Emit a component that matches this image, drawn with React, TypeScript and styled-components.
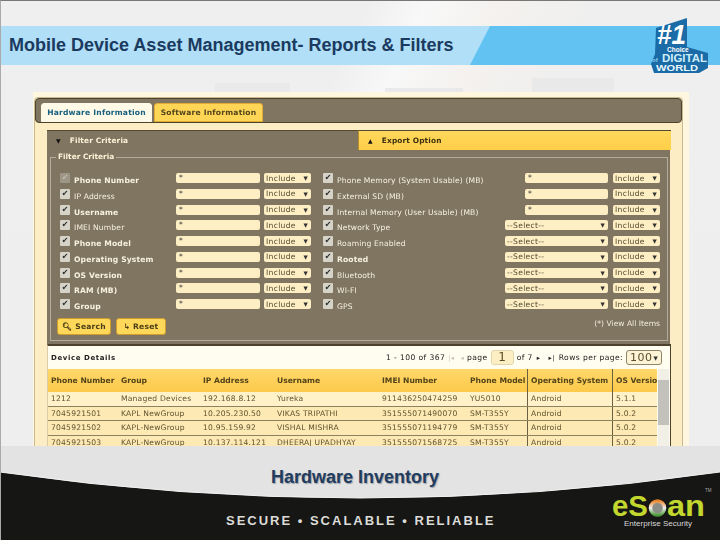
import React from "react";
import styled, { createGlobalStyle } from "styled-components";

const Global = createGlobalStyle`
  html, body { margin: 0; padding: 0; background: #efefef; }
  * { box-sizing: border-box; }
`;

const Slide = styled.div`
  position: relative;
  width: 720px;
  height: 540px;
  overflow: hidden;
  display: flex;
  flex-direction: column;
  padding-top: 25px;
  border-top: 1px solid #777;
  border-left: 1px solid #aaa;
  background:
    linear-gradient(115deg, transparent 38%, #f8f8f8 44%, #f4f1ee 52%, transparent 62%),
    linear-gradient(180deg, #efefef 0%, #eeeeee 100%);
`;

const Banner = styled.header`
  position: relative;
  height: 39px;
  margin-left: -1px;
  display: flex;
  align-items: center;
  justify-content: space-between;
  background: #b0dff7;
  flex: none;
`;

const Title = styled.h1`
  margin: 0 0 0 9px;
  font: bold 18px "Liberation Sans", Arial, sans-serif;
  color: #1b3a5f;
  white-space: nowrap;
`;

const BannerAccent = styled.div`
  width: 250px;
  height: 39px;
  background: #62c3f3;
  clip-path: polygon(20px 0, 100% 0, 100% 100%, 0 100%);
`;

const BadgeSvg = styled.svg`
  position: absolute;
  left: 649px;
  top: -8px;
`;

const Ghost = styled.div<{ $x: number; $w: number; $h: number }>`
  position: absolute;
  left: ${(p) => p.$x}px;
  top: ${(p) => 91 - p.$h}px;
  width: ${(p) => p.$w}px;
  height: ${(p) => p.$h}px;
  background: #e9e9e9;
`;

const Shot = styled.main`
  position: relative;
  margin: 27px 0 0 32px;
  width: 656px;
  height: 354px;
  flex: none;
  overflow: hidden;
  background: #fff6e0;
  padding: 5px 6px 0 1px;
  font-family: "DejaVu Sans", Verdana, sans-serif;
  font-size: 7.6px;
  filter: blur(0.45px);
`;

const Frame = styled.div`
  width: 649px;
  height: 400px;
  background: #fdedc4;
  border: 1px solid #c9bb8f;
  border-radius: 4px;
`;

const TabBar = styled.nav`
  height: 25px;
  background: #7f7561;
  border: 1px solid #4d432d;
  border-radius: 4px;
  display: flex;
  align-items: flex-end;
  gap: 2px;
  padding-left: 5px;
`;

const Tab = styled.div<{ $active?: boolean }>`
  height: 19px;
  width: ${(p) => (p.$active ? 111 : 109)}px;
  display: flex;
  align-items: center;
  justify-content: center;
  font-weight: bold;
  border-radius: 3px 3px 0 0;
  letter-spacing: 0.2px;
  background: ${(p) => (p.$active ? "#fff9e8" : "#ffd556")};
  color: ${(p) => (p.$active ? "#17607f" : "#54461c")};
  border: 1px solid ${(p) => (p.$active ? "#fff9e8" : "#e0ab36")};
`;

const Body = styled.div`
  padding: 7px 11px 0 12px;
`;

const Heads = styled.div`
  display: flex;
  height: 20px;
`;

const Head = styled.div<{ $open?: boolean }>`
  flex: ${(p) => (p.$open ? "0 0 311px" : "1")};
  display: flex;
  align-items: center;
  gap: 9px;
  padding-left: 9px;
  font-weight: bold;
  font-size: 7.4px;
  letter-spacing: 0.15px;
  color: ${(p) => (p.$open ? "#fdf3d8" : "#3c3010")};
  background: ${(p) => (p.$open ? "#7f7561" : "linear-gradient(180deg,#ffd85c,#ffce47)")};
  border-top: 1px solid #54492f;
  border-left: ${(p) => (p.$open ? "none" : "1px solid #b98f2c")};
`;

const Arrow = styled.span`
  font-size: 6px;
  color: #111;
`;

const FilterPanel = styled.section`
  width: 623px;
  height: 195px;
  background: #7f7561;
  padding: 7px 2px 4px 3px;
`;

const Fieldset = styled.div`
  position: relative;
  height: 184px;
  border: 1px solid #b2ac9d;
  padding: 15px 0 0 9px;
`;

const Legend = styled.span`
  position: absolute;
  top: -6px;
  left: 5px;
  padding: 0 2px;
  background: #7f7561;
  color: #fdf3d8;
  font-weight: bold;
  font-size: 7.4px;
`;

const FilterGrid = styled.div`
  display: grid;
  grid-template-columns: 14px 102px 84px 51px 26px 168px 103px 52px;
  grid-auto-rows: 15.75px;
  align-items: start;
`;

const Check = styled.span<{ $off?: boolean; $inset?: number }>`
  width: 10px;
  height: 10px;
  margin-left: ${(p) => p.$inset ?? 0}px;
  border-radius: 1px;
  display: flex;
  align-items: center;
  justify-content: center;
  background: ${(p) => (p.$off ? "#9d9686" : "#d6d3c8")};
  color: ${(p) => (p.$off ? "#c3bdb0" : "#2b2b2b")};
  font-size: 8px;
  line-height: 1;
`;

const Label = styled.span<{ $bold?: boolean }>`
  padding-top: 3px;
  color: #f7f1de;
  white-space: nowrap;
  letter-spacing: 0.15px;
  font-weight: ${(p) => (p.$bold ? "bold" : "normal")};
`;

const TextBox = styled.span<{ $second?: boolean }>`
  height: 10px;
  margin-left: ${(p) => (p.$second ? 20 : 0)}px;
  background: #fdeec4;
  border-radius: 2px;
  padding: 0 3px;
  color: #444;
  line-height: 10px;
`;

const Drop = styled.span<{ $inset?: number }>`
  height: 10px;
  display: flex;
  justify-content: space-between;
  align-items: center;
  margin-left: ${(p) => p.$inset ?? 0}px;
  background: #fdeec4;
  border-radius: 2px;
  padding: 0 3px 0 2px;
  color: #544a30;
  letter-spacing: 0.3px;
  white-space: nowrap;
`;

const Tri = styled.span`
  font-size: 5.5px;
  color: #333;
`;

const FootRow = styled.div`
  display: flex;
  align-items: center;
  justify-content: space-between;
  margin: 3px 0 0 -3px;
  padding-right: 7px;
`;

const Buttons = styled.div`
  display: flex;
  gap: 5px;
`;

const Btn = styled.span<{ $w: number }>`
  width: ${(p) => p.$w}px;
  height: 17px;
  display: flex;
  align-items: center;
  justify-content: center;
  gap: 3px;
  background: #ffd85a;
  border: 1px solid #cf9d2f;
  border-radius: 3px;
  color: #4a3d15;
  font-weight: bold;
  letter-spacing: 0.2px;
`;

const ViewAll = styled.span`
  color: #f2ecdb;
  margin-top: -6px;
`;

const Details = styled.section`
  width: 624px;
  height: 110px;
  background: #fffdf0;
  border-top: 2px solid #4d432d;
  border-right: 1px solid #4d432d;
  border-left: 1px solid #d8cda8;
  margin-top: -1px;
`;

const DetailBar = styled.div`
  height: 23px;
  display: flex;
  align-items: center;
  padding-left: 3px;
  padding-right: 6px;
  color: #222;
`;

const DetailTitle = styled.span`
  font-weight: bold;
  letter-spacing: 0.6px;
  font-size: 7px;
  flex: 0 0 335px;
`;

const Pager = styled.div`
  display: flex;
  align-items: center;
  color: #222;
  white-space: nowrap;
  letter-spacing: 0.4px;
`;

const PageBox = styled.span`
  width: 23px;
  height: 15px;
  margin: 0 3px;
  background: #fdeec4;
  border: 1px solid #e2d6ac;
  border-radius: 3px;
  font-size: 12px;
  line-height: 13px;
  text-align: center;
  color: #5a4d25;
`;

const PerPage = styled.span`
  width: 36px;
  height: 15px;
  margin-left: 3px;
  background: #fdf3d6;
  border: 1px solid #8f8568;
  border-radius: 3px;
  display: flex;
  align-items: center;
  justify-content: space-between;
  padding: 0 3px;
  font-size: 11px;
  color: #5a4d25;
`;

const Nav = styled.span<{ $off?: boolean }>`
  font-size: 6.5px;
  margin: 0 ${(p) => (p.$off ? 3 : 4)}px;
  color: ${(p) => (p.$off ? "#c9c4b4" : "#222")};
`;

const TableWrap = styled.div`
  display: flex;
`;

const Table = styled.div`
  width: 609px;
  overflow: hidden;
`;

const ROW = "70px 82px 74px 105px 88px 61px 85px 44px";

const HeadRow = styled.div`
  display: grid;
  grid-template-columns: ${ROW};
  height: 23px;
  align-items: stretch;
  background: linear-gradient(180deg, #ffd86a, #fcc94a);
`;

const HeadCell = styled.div<{ $rule?: boolean }>`
  display: flex;
  align-items: center;
  padding-left: 3px;
  font-weight: bold;
  color: #53431a;
  white-space: nowrap;
  overflow: hidden;
  border-right: ${(p) => (p.$rule ? "1px solid #6b5f42" : "none")};
`;

const DataRow = styled.div<{ $first?: boolean }>`
  display: grid;
  grid-template-columns: ${ROW};
  height: 14.5px;
  background: ${(p) => (p.$first ? "#fff2c9" : "#fde9b4")};
  border-bottom: 1px solid #8c8161;
`;

const Cell = styled.div<{ $rule?: boolean }>`
  display: flex;
  align-items: center;
  padding-left: 3px;
  color: #60522e;
  white-space: nowrap;
  overflow: hidden;
  letter-spacing: 0.2px;
  border-right: ${(p) => (p.$rule ? "1px solid #6b5f42" : "none")};
`;

const Scroll = styled.div`
  width: 11px;
  margin-left: 1px;
  background: #f1efe6;
  padding-top: 11px;
`;

const Thumb = styled.div`
  height: 45px;
  background: #c3c1bb;
`;

const Foot = styled.footer`
  position: relative;
  flex: 1;
  margin-left: -1px;
  background: #e3e3e3;
  display: flex;
  flex-direction: column;
`;

const Curve = styled.svg`
  position: absolute;
  left: 0;
  top: 0;
`;

const Caption = styled.div`
  position: relative;
  margin: 21px 0 0 271px;
  font: bold 18px "Liberation Sans", Arial, sans-serif;
  color: #223c60;
  text-shadow: 1px 1px 1px #9aa0a8;
  white-space: nowrap;
`;

const Bottom = styled.div`
  position: relative;
  flex: 1;
  display: flex;
  align-items: center;
  padding: 13px 0 0 226px;
`;

const Tagline = styled.div`
  font: bold 13px "Liberation Sans", Arial, sans-serif;
  letter-spacing: 2px;
  color: #dcdcd8;
  white-space: nowrap;
`;

const LogoSvg = styled.svg`
  position: absolute;
  left: 608px;
  top: -3px;
`;

type F = { name: string; bold?: boolean; off?: boolean };
const left: F[] = [
  { name: "Phone Number", bold: true, off: true },
  { name: "IP Address" },
  { name: "Username", bold: true },
  { name: "IMEI Number" },
  { name: "Phone Model", bold: true },
  { name: "Operating System", bold: true },
  { name: "OS Version", bold: true },
  { name: "RAM (MB)", bold: true },
  { name: "Group", bold: true },
];
const right: { name: string; bold?: boolean; select?: boolean }[] = [
  { name: "Phone Memory (System Usable) (MB)" },
  { name: "External SD (MB)" },
  { name: "Internal Memory (User Usable) (MB)" },
  { name: "Network Type", select: true },
  { name: "Roaming Enabled", select: true },
  { name: "Rooted", bold: true, select: true },
  { name: "Bluetooth", select: true },
  { name: "WI-FI", select: true },
  { name: "GPS", select: true },
];

const cols = ["Phone Number", "Group", "IP Address", "Username", "IMEI Number", "Phone Model", "Operating System", "OS Version"];
const rows = [
  ["1212", "Managed Devices", "192.168.8.12", "Yureka", "911436250474259", "YU5010", "Android", "5.1.1"],
  ["7045921501", "KAPL NewGroup", "10.205.230.50", "VIKAS TRIPATHI", "351555071490070", "SM-T355Y", "Android", "5.0.2"],
  ["7045921502", "KAPL-NewGroup", "10.95.159.92", "VISHAL MISHRA", "351555071194779", "SM-T355Y", "Android", "5.0.2"],
  ["7045921503", "KAPL-NewGroup", "10.137.114.121", "DHEERAJ UPADHYAY", "351555071568725", "SM-T355Y", "Android", "5.0.2"],
];

function Include({ inset }: { inset: number }) {
  return (
    <Drop $inset={inset}>
      Include <Tri>▼</Tri>
    </Drop>
  );
}

export default function App() {
  return (
    <Slide>
      <Global />
      <Ghost $x={214} $w={75} $h={9} />
      <Ghost $x={384} $w={78} $h={4} />
      <Ghost $x={531} $w={82} $h={14} />
      <Banner>
        <Title>Mobile Device Asset Management- Reports &amp; Filters</Title>
        <BannerAccent />
        <BadgeSvg width="60" height="56" viewBox="0 0 60 56">
          <polygon points="7,10 38,0 38,29 59,35 59,50 50,55 5,55 2,46 6,36" fill="#1a6ba6" />
          <text x="8" y="26" fontFamily="Liberation Sans" fontWeight="bold" fontStyle="italic" fontSize="28" fill="#fff" textLength="29" lengthAdjust="spacingAndGlyphs">#1</text>
          <text x="18" y="34" fontFamily="Liberation Sans" fontWeight="bold" fontSize="6.5" fill="#fff">Choice</text>
          <text x="3" y="44" fontFamily="Liberation Sans" fontWeight="bold" fontSize="6" fill="#8fd3f4">of</text>
          <text x="13" y="44" fontFamily="Liberation Sans" fontWeight="bold" fontSize="10" fill="#cfeefb" textLength="45" lengthAdjust="spacingAndGlyphs">DIGITAL</text>
          <text x="7" y="53" fontFamily="Liberation Sans" fontWeight="bold" fontSize="9.5" fill="#e8f6fc" textLength="42" lengthAdjust="spacingAndGlyphs">WORLD</text>
        </BadgeSvg>
      </Banner>

      <Shot>
        <Frame>
          <TabBar>
            <Tab $active>Hardware Information</Tab>
            <Tab>Software Information</Tab>
          </TabBar>
          <Body>
            <Heads>
              <Head $open>
                <Arrow>▼</Arrow> Filter Criteria
              </Head>
              <Head>
                <Arrow>▲</Arrow> Export Option
              </Head>
            </Heads>
            <FilterPanel>
              <Fieldset>
                <Legend>Filter Criteria</Legend>
                <FilterGrid>
                  {left.map((l, i) => (
                    <React.Fragment key={l.name}>
                      <Check $off={l.off}>✔</Check>
                      <Label $bold={l.bold}>{l.name}</Label>
                      <TextBox>*</TextBox>
                      <Include inset={4} />
                      <Check $inset={12}>✔</Check>
                      <Label $bold={right[i].bold}>{right[i].name}</Label>
                      {right[i].select ? (
                        <Drop>
                          --Select-- <Tri>▼</Tri>
                        </Drop>
                      ) : (
                        <TextBox $second>*</TextBox>
                      )}
                      <Include inset={5} />
                    </React.Fragment>
                  ))}
                </FilterGrid>
                <FootRow>
                  <Buttons>
                    <Btn $w={54}>🔍︎ Search</Btn>
                    <Btn $w={50}>↳ Reset</Btn>
                  </Buttons>
                  <ViewAll>(*) View All Items</ViewAll>
                </FootRow>
              </Fieldset>
            </FilterPanel>
            <Details>
              <DetailBar>
                <DetailTitle>Device Details</DetailTitle>
                <Pager>
                  1 - 100 of 367
                  <Nav $off>|◂</Nav>
                  <Nav $off>◂</Nav>
                  page
                  <PageBox>1</PageBox>
                  of 7
                  <Nav>▸</Nav>
                  <Nav>▸|</Nav>
                  Rows per page:
                  <PerPage>
                    100 <Tri>▼</Tri>
                  </PerPage>
                </Pager>
              </DetailBar>
              <TableWrap>
                <Table>
                  <HeadRow>
                    {cols.map((c, i) => (
                      <HeadCell key={c} $rule={i === 5 || i === 6}>{c}</HeadCell>
                    ))}
                  </HeadRow>
                  {rows.map((r, ri) => (
                    <DataRow key={r[0]} $first={ri === 0}>
                      {r.map((c, i) => (
                        <Cell key={i} $rule={i === 5 || i === 6}>{c}</Cell>
                      ))}
                    </DataRow>
                  ))}
                </Table>
                <Scroll>
                  <Thumb />
                </Scroll>
              </TableWrap>
            </Details>
          </Body>
        </Frame>
      </Shot>

      <Foot>
        <Curve width="720" height="94" viewBox="0 0 720 94">
          <path d="M0 26 Q360 78 720 26 V94 H0 Z" fill="#161614" />
          <path d="M0 26 Q360 78 720 26" fill="none" stroke="#f2f2f2" strokeWidth="1" />
        </Curve>
        <Caption>Hardware Inventory</Caption>
        <Bottom>
          <Tagline>SECURE • SCALABLE • RELIABLE</Tagline>
          <LogoSvg width="104" height="50" viewBox="0 0 104 50">
            <defs>
              <linearGradient id="ring" x1="0" y1="0" x2="0" y2="1">
                <stop offset="0" stopColor="#e8852a" />
                <stop offset="0.5" stopColor="#f2f2f2" />
                <stop offset="1" stopColor="#4f9a3a" />
              </linearGradient>
            </defs>
            <text x="4" y="31" fontFamily="Liberation Sans" fontWeight="bold" fontSize="30" fill="#c3d82e" textLength="36" lengthAdjust="spacingAndGlyphs">eS</text>
            <circle cx="49.5" cy="23" r="7" fill="#8d8d88" stroke="url(#ring)" strokeWidth="3.5" />
            <text x="59" y="31" fontFamily="Liberation Sans" fontWeight="bold" fontSize="30" fill="#c3d82e" textLength="38" lengthAdjust="spacingAndGlyphs">an</text>
            <text x="16" y="41" fontFamily="Liberation Sans" fontSize="8" fill="#d8d8d8" textLength="68" lengthAdjust="spacingAndGlyphs">Enterprise Security</text>
            <text x="97" y="7" fontFamily="Liberation Sans" fontSize="4.5" fill="#aaa">TM</text>
          </LogoSvg>
        </Bottom>
      </Foot>
    </Slide>
  );
}
